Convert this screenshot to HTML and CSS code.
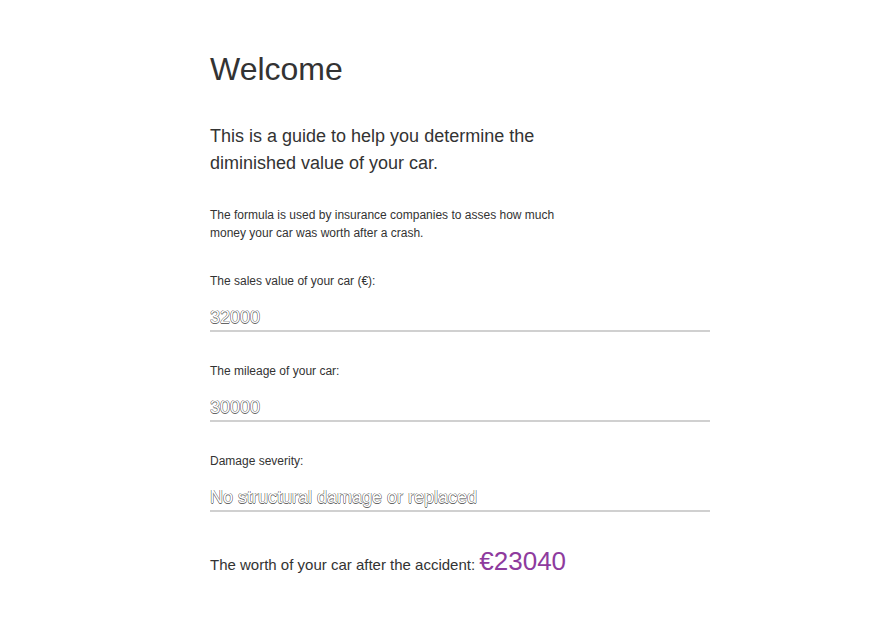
FILE: index.html
```html
<!DOCTYPE html>
<html lang="en">
<head>
<meta charset="utf-8">
<title>Diminished value</title>
<link rel="stylesheet" href="styles.css">
</head>
<body>
<main class="page">
  <h1 class="title">Welcome</h1>
  <p class="intro">This is a guide to help you determine the<br>diminished value of your car.</p>
  <p class="note">The formula is used by insurance companies to asses how much<br>money your car was worth after a crash.</p>
  <div class="field">
    <label class="label" for="sales">The sales value of your car (€):</label>
    <input class="input" id="sales" type="text" value="32000">
  </div>
  <div class="field">
    <label class="label" for="mileage">The mileage of your car:</label>
    <input class="input" id="mileage" type="text" value="30000">
  </div>
  <div class="field">
    <label class="label" for="damage">Damage severity:</label>
    <input class="input" id="damage" type="text" value="No structural damage or replaced">
  </div>
  <p class="result">The worth of your car after the accident: <span class="value">€23040</span></p>
</main>
</body>
</html>
```

FILE: styles.css
```css
html, body {
  margin: 0;
  padding: 0;
  background: #fff;
}
body {
  font-family: "Liberation Sans", Arial, sans-serif;
  color: #333;
}
.page {
  width: 500px;
  margin-left: 210px;
  padding-top: 49px;
}
.title {
  margin: 0;
  font-size: 32px;
  font-weight: normal;
  line-height: 40px;
}
.intro {
  margin: 34px 0 0;
  font-size: 18px;
  line-height: 27px;
}
.note {
  margin: 29px 0 0;
  font-size: 12px;
  line-height: 18px;
}
.field {
  margin-top: 30px;
  display: flex;
  flex-direction: column;
}
.label {
  font-size: 12px;
  line-height: 18px;
}
.input {
  margin-top: 14px;
  height: 26px;
  padding: 0;
  border: 0;
  border-bottom: 2px solid #d0d0d0;
  background: transparent;
  font-family: "Liberation Sans", Arial, sans-serif;
  font-size: 18px;
  color: #fff;
  text-shadow: -0.5px 0 #666, 0.5px 0 #666, 0 -0.5px #666, 0 0.5px #666;
  outline: none;
  box-sizing: content-box;
}
.result {
  margin: 34px 0 0;
  font-size: 15px;
  line-height: 30px;
}
.value {
  font-size: 26px;
  color: #8e3b9e;
}
```
